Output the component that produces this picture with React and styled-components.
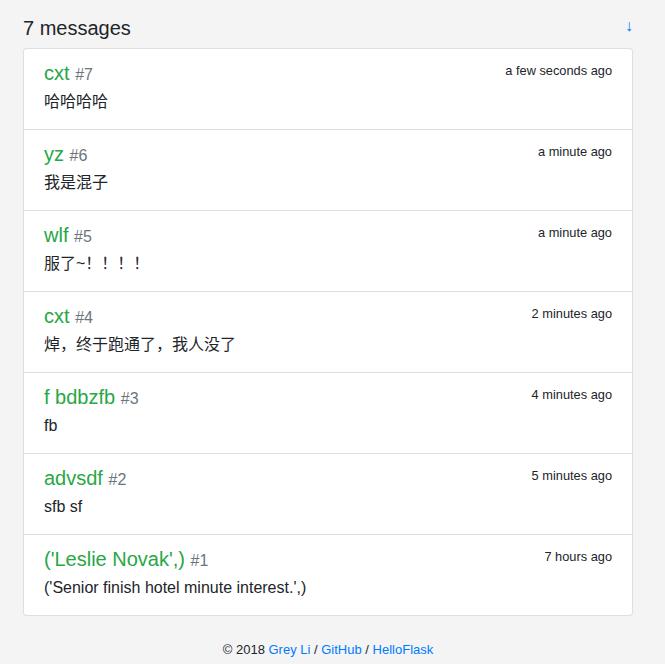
import React from 'react';
import styled, { createGlobalStyle } from 'styled-components';

const messages = [
  { id: 7, name: 'cxt', body: '哈哈哈哈', time: 'a few seconds ago' },
  { id: 6, name: 'yz', body: '我是混子', time: 'a minute ago' },
  { id: 5, name: 'wlf', body: '服了~！！！！', time: 'a minute ago' },
  { id: 4, name: 'cxt', body: '焯，终于跑通了，我人没了', time: '2 minutes ago' },
  { id: 3, name: 'f bdbzfb', body: 'fb', time: '4 minutes ago' },
  { id: 2, name: 'advsdf', body: 'sfb sf', time: '5 minutes ago' },
  { id: 1, name: "('Leslie Novak',)", body: "('Senior finish hotel minute interest.',)", time: '7 hours ago' },
];

const App = () => {
  return (
    <>
      <GlobalStyle />
      <Page>
        <Heading>
          {messages.length} messages
          <BottomLink href="#bottom" title="Go Bottom">↓</BottomLink>
        </Heading>
        <List>
          {messages.map((m) => (
            <Item key={m.id}>
              <ItemHead>
                <Name>
                  {m.name} <Num>#{m.id}</Num>
                </Name>
                <Time>{m.time}</Time>
              </ItemHead>
              <Body>{m.body}</Body>
            </Item>
          ))}
        </List>
        <Footer id="bottom">
          © 2018 <FooterLink href="#">Grey Li</FooterLink> / <FooterLink href="#">GitHub</FooterLink> /{' '}
          <FooterLink href="#">HelloFlask</FooterLink>
        </Footer>
      </Page>
    </>
  );
};

export default App;

const GlobalStyle = createGlobalStyle`
  html, body {
    margin: 0;
    padding: 0;
    background-color: #f4f4f4;
  }

  body {
    font-family: "Liberation Sans", Arial, "Noto Sans CJK SC", sans-serif;
    font-size: 16px;
    line-height: 1.5;
    color: #212529;
  }
`;

const Page = styled.div`
  padding: 16px 32px 0 23px;
`;

const Heading = styled.h5`
  display: flex;
  justify-content: space-between;
  align-items: center;
  height: 24px;
  margin: 0 0 8px;
  font-size: 20px;
  font-weight: 500;
  line-height: 24px;
`;

const BottomLink = styled.a`
  margin-top: -4px;
  font-size: 16px;
  line-height: 16px;
  color: #007bff;
  text-decoration: none;
`;

const List = styled.div`
  display: flex;
  flex-direction: column;
  background-color: #fff;
  border: 1px solid rgba(0, 0, 0, 0.125);
  border-radius: 4px;
`;

const Item = styled.div`
  padding: 12px 20px;
  border-bottom: 1px solid rgba(0, 0, 0, 0.125);

  &:last-child {
    border-bottom: none;
  }
`;

const ItemHead = styled.div`
  display: flex;
  justify-content: space-between;
  align-items: flex-start;
  height: 24px;
  margin-bottom: 5px;
`;

const Name = styled.h5`
  margin: 0;
  height: 24px;
  font-size: 20px;
  font-weight: 500;
  line-height: 24px;
  color: #28a745;
`;

const Num = styled.small`
  font-size: 16px;
  font-weight: 400;
  line-height: 1;
  color: #6c757d;
`;

const Time = styled.small`
  font-size: 12.8px;
  line-height: 19px;
`;

const Body = styled.p`
  height: 24px;
  margin: 0 0 3px;
  line-height: 24px;
`;

const Footer = styled.footer`
  margin-top: 24px;
  font-size: 13px;
  line-height: 20px;
  text-align: center;
`;

const FooterLink = styled.a`
  color: #007bff;
  text-decoration: none;
`;
